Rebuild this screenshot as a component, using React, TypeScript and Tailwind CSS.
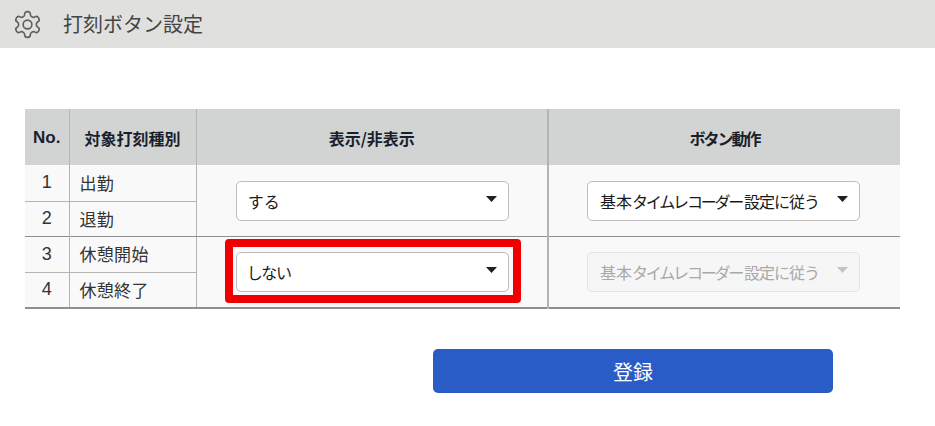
import React from "react";

const font = "font-['Noto_Sans_CJK_JP','Noto_Sans',sans-serif]";

function Gear() {
  return (
    <svg width="31" height="31" viewBox="0 0 24 24" fill="none" stroke="#5f5f5f" strokeWidth="1.25" strokeLinecap="round" strokeLinejoin="round">
      <path d="M12.22 2h-.44a2 2 0 0 0-2 2v.18a2 2 0 0 1-1 1.73l-.43.25a2 2 0 0 1-2 0l-.15-.08a2 2 0 0 0-2.73.73l-.22.38a2 2 0 0 0 .73 2.73l.15.1a2 2 0 0 1 1 1.72v.51a2 2 0 0 1-1 1.74l-.15.09a2 2 0 0 0-.73 2.73l.22.38a2 2 0 0 0 2.73.73l.15-.08a2 2 0 0 1 2 0l.43.25a2 2 0 0 1 1 1.73V20a2 2 0 0 0 2 2h.44a2 2 0 0 0 2-2v-.18a2 2 0 0 1 1-1.73l.43-.25a2 2 0 0 1 2 0l.15.08a2 2 0 0 0 2.73-.73l.22-.39a2 2 0 0 0-.73-2.73l-.15-.08a2 2 0 0 1-1-1.74v-.5a2 2 0 0 1 1-1.74l.15-.09a2 2 0 0 0 .73-2.73l-.22-.38a2 2 0 0 0-2.73-.73l-.15.08a2 2 0 0 1-2 0l-.43-.25a2 2 0 0 1-1-1.73V4a2 2 0 0 0-2-2z" />
      <circle cx="12" cy="12" r="3.4" />
    </svg>
  );
}

function Select({ children, disabled }: { children: React.ReactNode; disabled?: boolean }) {
  return (
    <div
      className={
        "flex h-10 w-[273px] items-center justify-between rounded-[5px] border pl-[13px] pr-[11px] text-[16px] " +
        (disabled
          ? "border-[#e4e4e4] bg-[#f6f6f6] text-[#a9a9a9]"
          : "border-[#bdbdbd] bg-white text-[#1a1a1a]")
      }
    >
      <span className="whitespace-nowrap">{children}</span>
      <svg width="11" height="6" viewBox="0 0 11 6" className="mb-[3px] shrink-0">
        <path d="M0 0h11L5.5 6z" fill={disabled ? "#c4c4c4" : "#1c2128"} />
      </svg>
    </div>
  );
}

function Basic() {
  return (
    <>
      <span className="-ml-[1px]">基本</span>
      <span className="tracking-[-2.2px]">タイムレコーダー</span>
      <span className="pl-[2px] tracking-[-1px]">設定に従う</span>
    </>
  );
}

const th = "border-r border-[#b4b4b4] pt-[1px] text-[16px] font-bold text-[#1a1f2b] text-center align-middle";
const tdNo = "border-r border-[#b4b4b4] text-center text-[18px] text-[#333] p-0 font-['Liberation_Sans','Noto_Sans_CJK_JP',sans-serif]";
const tdName = "border-r border-[#b4b4b4] pl-[10px] text-[17px] text-[#333] p-0 tracking-[0.3px]";

export default function App() {
  return (
    <div className={`h-[426px] w-[935px] overflow-hidden bg-white ${font}`}>
      <header className="flex h-12 items-center gap-[20px] bg-[#e0e0de] pl-[12px]">
        <Gear />
        <h1 className="text-[20px] font-normal leading-none text-[#444]">打刻ボタン設定</h1>
      </header>

      <div className="pl-[25px] pt-[61px]">
        <table className="w-[875px] table-fixed border-collapse bg-[#f9f9f9]">
          <colgroup>
            <col className="w-[44px]" />
            <col className="w-[127px]" />
            <col className="w-[352px]" />
            <col className="w-[352px]" />
          </colgroup>
          <thead>
            <tr className="h-[56px] bg-[#d2d4d4]">
              <th className={`${th} px-0 text-[17px] font-['Liberation_Sans','Noto_Sans_CJK_JP',sans-serif]`}>No.</th>
              <th className={`${th} px-0`}>対象打刻種別</th>
              <th className={`${th} border-r-2 px-0`}>表示/非表示</th>
              <th className="px-0 pt-[1px] text-center text-[16px] font-bold tracking-[-2px] text-[#1a1f2b]">ボタン動作</th>
            </tr>
          </thead>
          <tbody>
            <tr className="h-[36px]">
              <td className={`${tdNo} border-b border-[#8f8f8f]`}>1</td>
              <td className={`${tdName} border-b border-[#8f8f8f]`}>出勤</td>
              <td rowSpan={2} className="border-r-2 border-b border-[#b4b4b4] border-b-[#8f8f8f] p-0">
                <div className="flex justify-center pl-[1px] pt-[1px]"><Select><span className="-ml-[2px]">する</span></Select></div>
              </td>
              <td rowSpan={2} className="border-b border-[#8f8f8f] p-0">
                <div className="flex justify-center pr-[2px] pt-[1px]"><Select><Basic /></Select></div>
              </td>
            </tr>
            <tr className="h-[35px] border-b border-[#8f8f8f]">
              <td className={tdNo}>2</td>
              <td className={tdName}>退勤</td>
            </tr>
            <tr className="h-[36px]">
              <td className={`${tdNo} border-b border-[#8f8f8f]`}>3</td>
              <td className={`${tdName} border-b border-[#8f8f8f]`}>休憩開始</td>
              <td rowSpan={2} className="border-r-2 border-[#b4b4b4] p-0">
                <div className="flex justify-center pl-[1px]">
                  <div className="relative">
                    <Select><span className="-ml-[3px] tracking-[-1.4px]">しない</span></Select>
                    <div className="pointer-events-none absolute -left-[11px] -right-[12px] -top-[13px] -bottom-[11px] rounded-[4px] border-[8px] border-[#f00000]" />
                  </div>
                </div>
              </td>
              <td rowSpan={2} className="p-0">
                <div className="flex justify-center pr-[2px]"><Select disabled><Basic /></Select></div>
              </td>
            </tr>
            <tr className="h-[36px] border-b-2 border-[#8f8f8f]">
              <td className={tdNo}>4</td>
              <td className={tdName}>休憩終了</td>
            </tr>
          </tbody>
        </table>

        <div className="pl-[408px] pt-[40px]">
          <button className="h-11 w-[400px] rounded-[5px] bg-[#2a5cc7] pt-[1px] text-[20px] text-white">登録</button>
        </div>
      </div>
    </div>
  );
}
